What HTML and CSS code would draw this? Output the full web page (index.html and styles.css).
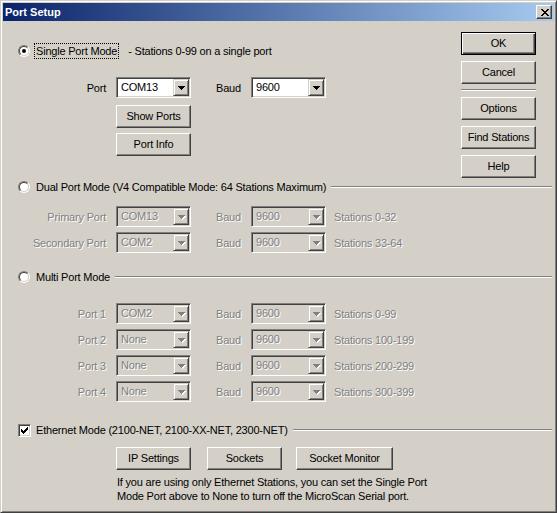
FILE: index.html
```html
<!DOCTYPE html>
<html>
<head>
<meta charset="utf-8">
<title>Port Setup</title>
<link rel="stylesheet" href="styles.css">
</head>
<body>
<div class="window">
  <div class="titlebar">
    <span class="title">Port Setup</span>
    <span class="close"><svg width="8" height="7" viewBox="0 0 8 7" shape-rendering="crispEdges"><path d="M0 0h2v1H0zM6 0h2v1H6zM1 1h2v1H1zM5 1h2v1H5zM2 2h4v1H2zM3 3h2v1H3zM2 4h4v1H2zM1 5h2v1H1zM5 5h2v1H5zM0 6h2v1H0zM6 6h2v1H6z" fill="#000"/></svg></span>
  </div>
  <div class="client">
    <div class="top">
      <div class="single">
        <div class="head">
          <span class="radio"><span class="radio-in"><span class="dot"></span></span></span>
          <span class="lbl focus">Single Port Mode</span>
          <span class="note">- Stations 0-99 on a single port</span>
        </div>
        <div class="row first-row">
          <span class="plabel">Port</span>
          <span class="combo"><span class="ctext">COM13</span><span class="drop"><svg width="7" height="4" viewBox="0 0 7 4" shape-rendering="crispEdges"><path d="M0 0h7v1H0zM1 1h5v1H1zM2 2h3v1H2zM3 3h1v1H3z" fill="#000"/></svg></span></span>
          <span class="blabel">Baud</span>
          <span class="combo"><span class="ctext">9600</span><span class="drop"><svg width="7" height="4" viewBox="0 0 7 4" shape-rendering="crispEdges"><path d="M0 0h7v1H0zM1 1h5v1H1zM2 2h3v1H2zM3 3h1v1H3z" fill="#000"/></svg></span></span>
        </div>
        <div class="btnstack">
          <button class="btn">Show Ports</button>
          <button class="btn">Port Info</button>
        </div>
      </div>
      <div class="side">
        <button class="btn default">OK</button>
        <button class="btn">Cancel</button>
        <div class="sep"></div>
        <button class="btn">Options</button>
        <button class="btn">Find Stations</button>
        <button class="btn">Help</button>
      </div>
    </div>

    <div class="head dual-head">
      <span class="radio"><span class="radio-in"></span></span>
      <span class="lbl">Dual Port Mode (V4 Compatible Mode: 64 Stations Maximum)</span>
      <span class="line"></span>
    </div>
    <div class="rows dual-rows">
      <div class="row off">
        <span class="plabel">Primary Port</span>
        <span class="combo"><span class="ctext">COM13</span><span class="drop"><svg width="8" height="5" viewBox="0 0 8 5" shape-rendering="crispEdges"><path d="M1 1h7v1H1zM2 2h5v1H2zM3 3h3v1H3zM4 4h1v1H4z" fill="#fff"/><path d="M0 0h7v1H0zM1 1h5v1H1zM2 2h3v1H2zM3 3h1v1H3z" fill="#808080"/></svg></span></span>
        <span class="blabel">Baud</span>
        <span class="combo"><span class="ctext">9600</span><span class="drop"><svg width="8" height="5" viewBox="0 0 8 5" shape-rendering="crispEdges"><path d="M1 1h7v1H1zM2 2h5v1H2zM3 3h3v1H3zM4 4h1v1H4z" fill="#fff"/><path d="M0 0h7v1H0zM1 1h5v1H1zM2 2h3v1H2zM3 3h1v1H3z" fill="#808080"/></svg></span></span>
        <span class="stations">Stations 0-32</span>
      </div>
      <div class="row off">
        <span class="plabel">Secondary Port</span>
        <span class="combo"><span class="ctext">COM2</span><span class="drop"><svg width="8" height="5" viewBox="0 0 8 5" shape-rendering="crispEdges"><path d="M1 1h7v1H1zM2 2h5v1H2zM3 3h3v1H3zM4 4h1v1H4z" fill="#fff"/><path d="M0 0h7v1H0zM1 1h5v1H1zM2 2h3v1H2zM3 3h1v1H3z" fill="#808080"/></svg></span></span>
        <span class="blabel">Baud</span>
        <span class="combo"><span class="ctext">9600</span><span class="drop"><svg width="8" height="5" viewBox="0 0 8 5" shape-rendering="crispEdges"><path d="M1 1h7v1H1zM2 2h5v1H2zM3 3h3v1H3zM4 4h1v1H4z" fill="#fff"/><path d="M0 0h7v1H0zM1 1h5v1H1zM2 2h3v1H2zM3 3h1v1H3z" fill="#808080"/></svg></span></span>
        <span class="stations">Stations 33-64</span>
      </div>
    </div>

    <div class="head multi-head">
      <span class="radio"><span class="radio-in"></span></span>
      <span class="lbl">Multi Port Mode</span>
      <span class="line"></span>
    </div>
    <div class="rows multi-rows">
      <div class="row off">
        <span class="plabel">Port 1</span>
        <span class="combo"><span class="ctext">COM2</span><span class="drop"><svg width="8" height="5" viewBox="0 0 8 5" shape-rendering="crispEdges"><path d="M1 1h7v1H1zM2 2h5v1H2zM3 3h3v1H3zM4 4h1v1H4z" fill="#fff"/><path d="M0 0h7v1H0zM1 1h5v1H1zM2 2h3v1H2zM3 3h1v1H3z" fill="#808080"/></svg></span></span>
        <span class="blabel">Baud</span>
        <span class="combo"><span class="ctext">9600</span><span class="drop"><svg width="8" height="5" viewBox="0 0 8 5" shape-rendering="crispEdges"><path d="M1 1h7v1H1zM2 2h5v1H2zM3 3h3v1H3zM4 4h1v1H4z" fill="#fff"/><path d="M0 0h7v1H0zM1 1h5v1H1zM2 2h3v1H2zM3 3h1v1H3z" fill="#808080"/></svg></span></span>
        <span class="stations">Stations 0-99</span>
      </div>
      <div class="row off">
        <span class="plabel">Port 2</span>
        <span class="combo"><span class="ctext">None</span><span class="drop"><svg width="8" height="5" viewBox="0 0 8 5" shape-rendering="crispEdges"><path d="M1 1h7v1H1zM2 2h5v1H2zM3 3h3v1H3zM4 4h1v1H4z" fill="#fff"/><path d="M0 0h7v1H0zM1 1h5v1H1zM2 2h3v1H2zM3 3h1v1H3z" fill="#808080"/></svg></span></span>
        <span class="blabel">Baud</span>
        <span class="combo"><span class="ctext">9600</span><span class="drop"><svg width="8" height="5" viewBox="0 0 8 5" shape-rendering="crispEdges"><path d="M1 1h7v1H1zM2 2h5v1H2zM3 3h3v1H3zM4 4h1v1H4z" fill="#fff"/><path d="M0 0h7v1H0zM1 1h5v1H1zM2 2h3v1H2zM3 3h1v1H3z" fill="#808080"/></svg></span></span>
        <span class="stations">Stations 100-199</span>
      </div>
      <div class="row off">
        <span class="plabel">Port 3</span>
        <span class="combo"><span class="ctext">None</span><span class="drop"><svg width="8" height="5" viewBox="0 0 8 5" shape-rendering="crispEdges"><path d="M1 1h7v1H1zM2 2h5v1H2zM3 3h3v1H3zM4 4h1v1H4z" fill="#fff"/><path d="M0 0h7v1H0zM1 1h5v1H1zM2 2h3v1H2zM3 3h1v1H3z" fill="#808080"/></svg></span></span>
        <span class="blabel">Baud</span>
        <span class="combo"><span class="ctext">9600</span><span class="drop"><svg width="8" height="5" viewBox="0 0 8 5" shape-rendering="crispEdges"><path d="M1 1h7v1H1zM2 2h5v1H2zM3 3h3v1H3zM4 4h1v1H4z" fill="#fff"/><path d="M0 0h7v1H0zM1 1h5v1H1zM2 2h3v1H2zM3 3h1v1H3z" fill="#808080"/></svg></span></span>
        <span class="stations">Stations 200-299</span>
      </div>
      <div class="row off">
        <span class="plabel">Port 4</span>
        <span class="combo"><span class="ctext">None</span><span class="drop"><svg width="8" height="5" viewBox="0 0 8 5" shape-rendering="crispEdges"><path d="M1 1h7v1H1zM2 2h5v1H2zM3 3h3v1H3zM4 4h1v1H4z" fill="#fff"/><path d="M0 0h7v1H0zM1 1h5v1H1zM2 2h3v1H2zM3 3h1v1H3z" fill="#808080"/></svg></span></span>
        <span class="blabel">Baud</span>
        <span class="combo"><span class="ctext">9600</span><span class="drop"><svg width="8" height="5" viewBox="0 0 8 5" shape-rendering="crispEdges"><path d="M1 1h7v1H1zM2 2h5v1H2zM3 3h3v1H3zM4 4h1v1H4z" fill="#fff"/><path d="M0 0h7v1H0zM1 1h5v1H1zM2 2h3v1H2zM3 3h1v1H3z" fill="#808080"/></svg></span></span>
        <span class="stations">Stations 300-399</span>
      </div>
    </div>

    <div class="head eth-head">
      <span class="check"><svg width="7" height="7" viewBox="0 0 7 7" shape-rendering="crispEdges"><path d="M0 2h1v3H0zM1 3h1v3H1zM2 4h1v3H2zM3 3h1v3H3zM4 2h1v3H4zM5 1h1v3H5zM6 0h1v3H6z" fill="#000"/></svg></span>
      <span class="lbl">Ethernet Mode (2100-NET, 2100-XX-NET, 2300-NET)</span>
      <span class="line"></span>
    </div>
    <div class="eth-buttons">
      <button class="btn ip">IP Settings</button>
      <button class="btn sockets">Sockets</button>
      <button class="btn monitor">Socket Monitor</button>
    </div>
    <p class="eth-note">If you are using only Ethernet Stations, you can set the Single Port<br>Mode Port above to None to turn off the MicroScan Serial port.</p>
  </div>
</div>
</body>
</html>
```

FILE: styles.css
```css
html, body {
  margin: 0;
  padding: 0;
  background: #D4D0C8;
}

body {
  font-family: "Liberation Sans", Arial, sans-serif;
  font-size: 11px;
  color: #000;
}

.window {
  width: 557px;
  height: 513px;
  box-sizing: border-box;
  background: #D4D0C8;
  border: 1px solid;
  border-color: #D4D0C8 #404040 #404040 #D4D0C8;
  box-shadow: inset 1px 1px #fff, inset -1px -1px #808080;
  padding: 2px;
  overflow: hidden;
}

/* Title bar */
.titlebar {
  height: 18px;
  display: flex;
  align-items: center;
  justify-content: space-between;
  background: linear-gradient(to right, #0A246A, #A6CAF0);
  padding: 0 2px 0 2px;
}

.title {
  color: #fff;
  font-weight: bold;
  font-size: 11px;
  letter-spacing: 0;
}

.close {
  width: 16px;
  height: 14px;
  box-sizing: border-box;
  background: #D4D0C8;
  border: 1px solid;
  border-color: #fff #404040 #404040 #fff;
  box-shadow: inset -1px -1px #808080;
  display: flex;
  align-items: center;
  justify-content: center;
  padding-left: 1px;
}

.close svg { display: block; }

/* Client area */
.client {
  letter-spacing: -0.2px;
}

.top {
  display: flex;
  align-items: flex-start;
}

.single {
  flex: 1;
  padding-top: 22px;
}

.btnstack {
  display: flex;
  flex-direction: column;
  gap: 5px;
  margin-top: 7px;
  margin-left: 113px;
}

.side {
  width: 75px;
  margin-top: 11px;
  margin-right: 18px;
  display: flex;
  flex-direction: column;
}

.side .btn + .btn { margin-top: 6px; }

.sep {
  height: 0;
  border-top: 1px solid #808080;
  border-bottom: 1px solid #fff;
  margin: 5px 0 6px;
}

/* Buttons */
.btn {
  appearance: none;
  -webkit-appearance: none;
  width: 75px;
  height: 23px;
  box-sizing: border-box;
  margin: 0;
  padding: 0;
  font: inherit;
  letter-spacing: inherit;
  color: #000;
  background: #D4D0C8;
  border: 1px solid;
  border-color: #fff #404040 #404040 #fff;
  box-shadow: inset -1px -1px #808080;
  text-align: center;
  line-height: 19px;
}

.btn.default {
  border: 1px solid #000;
  box-shadow: inset 1px 1px #fff, inset -1px -1px #404040, inset -2px -2px #808080;
}

/* Section heads */
.head {
  height: 16px;
  display: flex;
  align-items: center;
  padding-left: 15px;
  padding-right: 2px;
}

.dual-head { margin-top: 1px; }
.multi-head { margin-top: 16px; }
.eth-head { margin-top: 20px; }

.radio {
  width: 12px;
  height: 12px;
  box-sizing: border-box;
  border-radius: 50%;
  border: 1px solid;
  border-color: #808080 #fff #fff #808080;
  margin-right: 4px;
  flex: none;
}

.radio-in {
  display: flex;
  align-items: center;
  justify-content: center;
  width: 10px;
  height: 10px;
  box-sizing: border-box;
  border-radius: 50%;
  border: 1px solid;
  border-color: #404040 #D4D0C8 #D4D0C8 #404040;
  background: #fff;
}

.dot {
  width: 4px;
  height: 4px;
  border-radius: 50%;
  background: #000;
}

.check {
  width: 13px;
  height: 13px;
  box-sizing: border-box;
  border: 1px solid;
  border-color: #808080 #fff #fff #808080;
  box-shadow: inset 1px 1px #404040, inset -1px -1px #D4D0C8;
  background: #fff;
  display: flex;
  align-items: center;
  justify-content: center;
  margin-right: 3px;
  flex: none;
}

.check svg { display: block; }

.lbl {
  border: 1px dotted transparent;
  padding: 0 1px;
  line-height: 14px;
  white-space: nowrap;
}

.lbl.focus {
  border-color: #000;
}

.note {
  margin-left: 9px;
  white-space: nowrap;
}

.line {
  flex: 1;
  height: 0;
  border-top: 1px solid #808080;
  border-bottom: 1px solid #fff;
  margin-left: 3px;
}

/* Port rows */
.rows {
  display: flex;
  flex-direction: column;
  gap: 5px;
}

.dual-rows { margin-top: 11px; }
.multi-rows { margin-top: 18px; }

.row {
  height: 21px;
  display: flex;
  align-items: center;
}

.first-row { margin-top: 18px; }

.plabel {
  width: 103px;
  margin-right: 10px;
  text-align: right;
  white-space: nowrap;
  flex: none;
}

.blabel {
  width: 26px;
  margin-left: 25px;
  margin-right: 9px;
  white-space: nowrap;
  flex: none;
}

.stations {
  margin-left: 8px;
  white-space: nowrap;
}

.combo {
  width: 75px;
  height: 21px;
  box-sizing: border-box;
  border: 1px solid;
  border-color: #808080 #fff #fff #808080;
  box-shadow: inset 1px 1px #404040, inset -1px -1px #D4D0C8;
  padding: 1px;
  display: flex;
  align-items: stretch;
  background: #fff;
  flex: none;
}

.ctext {
  flex: 1;
  padding-left: 3px;
  line-height: 17px;
}

.drop {
  width: 16px;
  height: 17px;
  box-sizing: border-box;
  background: #D4D0C8;
  border: 1px solid;
  border-color: #D4D0C8 #404040 #404040 #D4D0C8;
  box-shadow: inset 1px 1px #fff, inset -1px -1px #808080;
  display: flex;
  align-items: center;
  justify-content: center;
}

.drop svg { display: block; }

.row.off {
  color: #808080;
  text-shadow: 1px 1px 0 #fff;
}

.row.off .combo { background: #D4D0C8; }

.row.off .drop svg { margin-left: 1px; margin-top: 1px; }

/* Ethernet */
.eth-buttons {
  display: flex;
  margin-top: 9px;
  padding-left: 113px;
}

.eth-buttons .ip { margin-right: 16px; }
.eth-buttons .sockets { margin-right: 14px; }
.eth-buttons .monitor { width: 97px; }

.eth-note {
  margin: 5px 0 0;
  padding-left: 114px;
  line-height: 14px;
  white-space: nowrap;
}
```
